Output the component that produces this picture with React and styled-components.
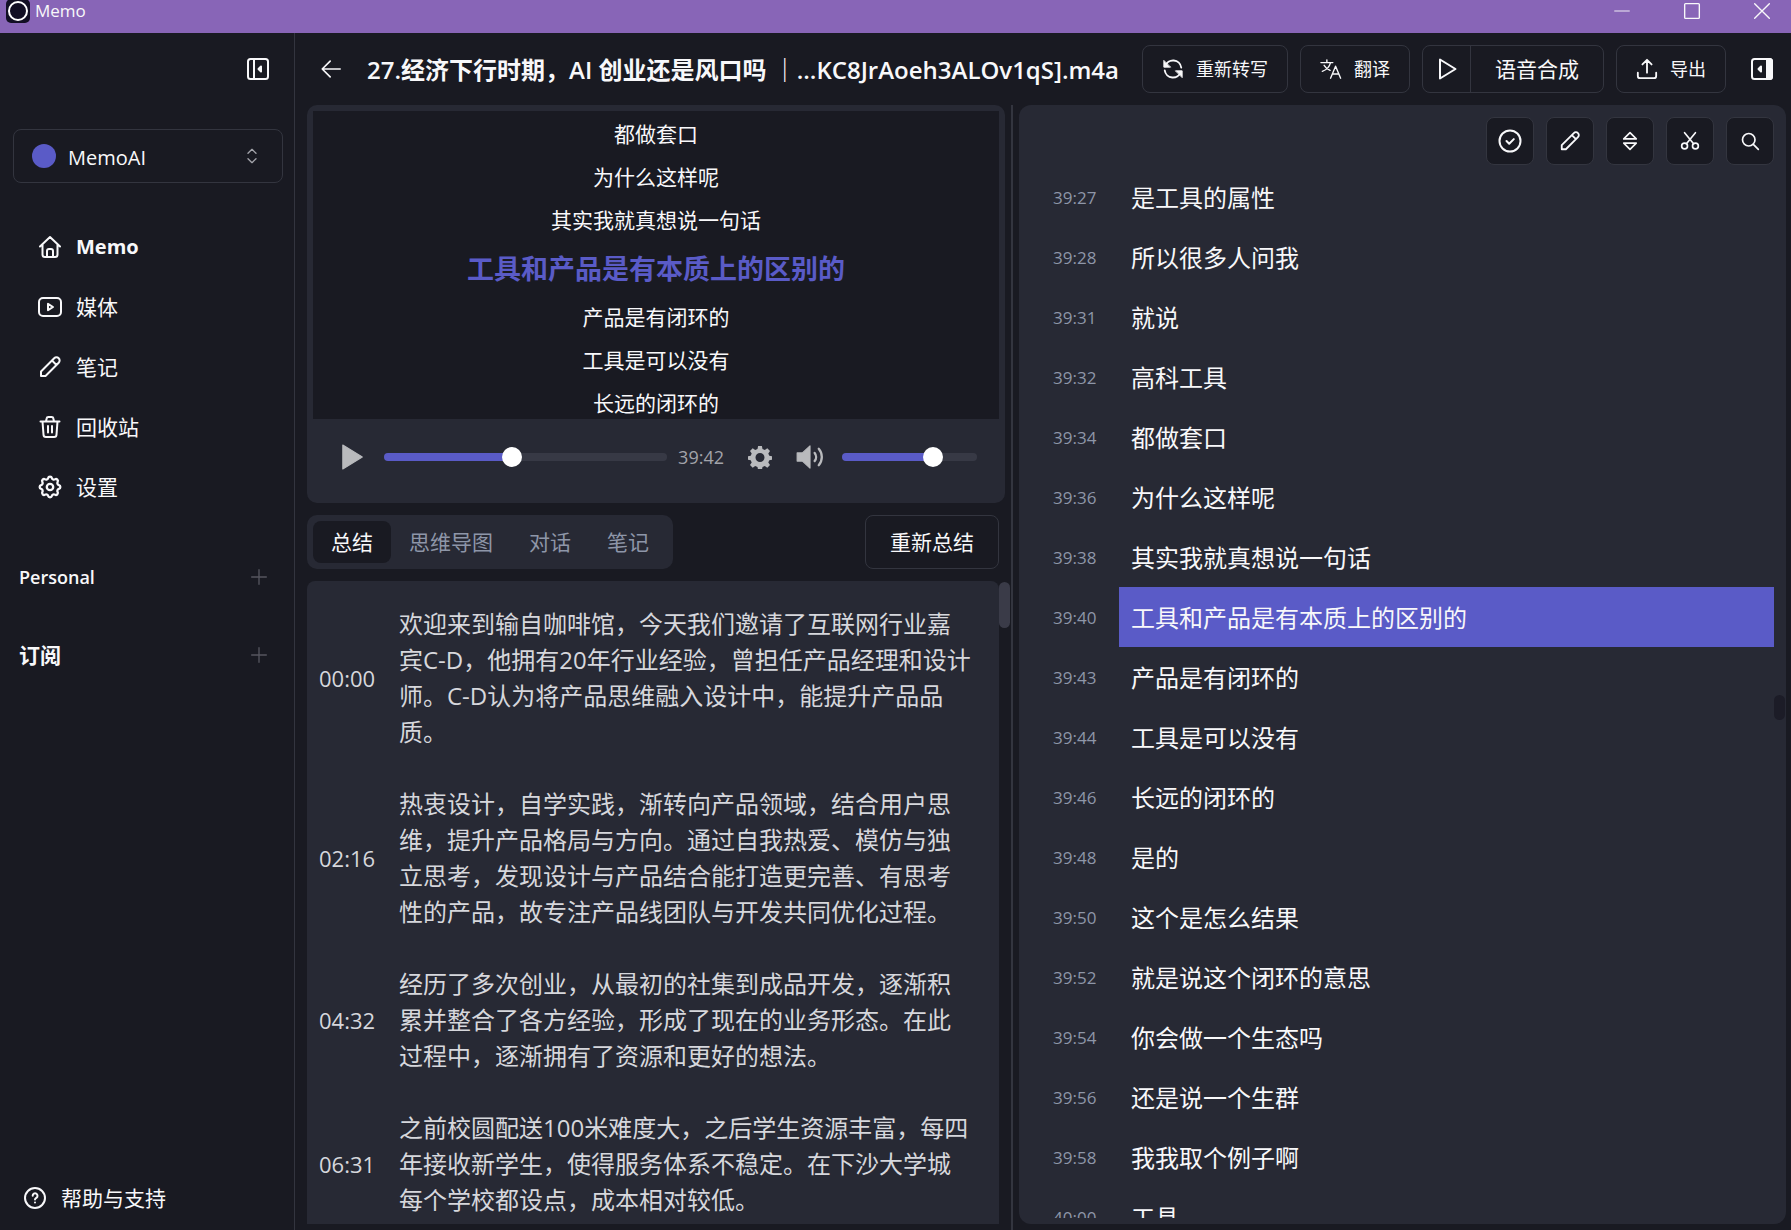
import React, { useState } from 'react';
import styled, { createGlobalStyle } from 'styled-components';

const colors = {
  bg: '#191a22',
  panel: '#272934',
  border: '#33353f',
  accent: '#5a5bc7',
  title: '#8865b7',
  text: '#f8f8fa',
  muted: '#8e96a8',
};

const GlobalStyle = createGlobalStyle`
  * {
    box-sizing: border-box;
  }

  body {
    margin: 0;
    background: ${colors.bg};
    color: ${colors.text};
    font-family: 'Open Sans', 'Noto Sans CJK SC', sans-serif;
    font-size: 21px;
    line-height: 32px;
  }

  ul,
  ol,
  p,
  h1,
  h2 {
    margin: 0;
    padding: 0;
    list-style: none;
  }

  a {
    color: inherit;
    text-decoration: none;
  }

  button,
  select {
    margin: 0;
    padding: 0;
    border: 0;
    background: none;
    color: inherit;
    font: inherit;
    cursor: pointer;
  }
`;

/* Icons */
const Svg = styled.svg`
  display: block;
  flex: none;
  width: ${(props) => props.$size}px;
  height: ${(props) => props.$size}px;
  fill: none;
  stroke: currentColor;
  stroke-width: ${(props) => props.$stroke || 2};
  stroke-linecap: round;
  stroke-linejoin: round;

  .solid {
    fill: currentColor;
  }
`;

const icons = {
  panelLeft: (
    <>
      <rect x="2" y="2" width="20" height="20" rx="2.5" />
      <path d="M8 2v20" />
      <path className="solid" d="M15 9.5L12.5 12l2.5 2.5z" />
    </>
  ),
  panelRight: (
    <>
      <rect x="2" y="2" width="20" height="20" rx="2.5" />
      <path className="solid" d="M17 2h2.5A2.5 2.5 0 0 1 22 4.500v15a2.500 2.500 0 0 1-2.500 2.500H17z" />
      <path className="solid" d="M11 9.500L8.500 12l2.500 2.500z" />
    </>
  ),
  arrowLeft: <path d="M23 12H1.500M11 2.500L1.500 12l9.500 9.500" />,
  updown: <path d="M6 8l6-6 6 6M6 16l6 6 6-6" />,
  home: (
    <path d="M2 11.500L12 2l10 9.500M4.500 9.500v10A2.500 2.500 0 0 0 7 22h10a2.500 2.500 0 0 0 2.500-2.500v-10M9 22v-6a2 2 0 0 1 2-2h2a2 2 0 0 1 2 2v6" />
  ),
  video: (
    <>
      <rect x="1" y="3" width="22" height="18" rx="4" />
      <path d="M10 8.800v6.400l5-3.200z" />
    </>
  ),
  pencil: (
    <path d="M3 21v-4.500L16.200 3.300a3.180 3.180 0 0 1 4.500 4.500L7.500 21zM14 5.500l4.500 4.500" />
  ),
  trash: (
    <path d="M2.500 6.500h19M8 6.500l.6-3A1.800 1.800 0 0 1 10.400 2h3.200a1.800 1.800 0 0 1 1.800 1.500l.6 3M4.500 6.500l1 13A2.500 2.500 0 0 0 8 22h8a2.500 2.500 0 0 0 2.500-2.500l1-13M10 11v6.500M14 11v6.500" />
  ),
  settings: (
    <g transform="translate(-1.800 -1.800) scale(1.150)">
      <path d="M10.325 4.317c.426-1.756 2.924-1.756 3.350 0a1.724 1.724 0 0 0 2.573 1.066c1.543-.94 3.310.826 2.370 2.370a1.724 1.724 0 0 0 1.065 2.572c1.756.426 1.756 2.924 0 3.350a1.724 1.724 0 0 0-1.066 2.573c.94 1.543-.826 3.310-2.370 2.370a1.724 1.724 0 0 0-2.572 1.065c-.426 1.756-2.924 1.756-3.350 0a1.724 1.724 0 0 0-2.573-1.066c-1.543.94-3.310-.826-2.370-2.370a1.724 1.724 0 0 0-1.065-2.572c-1.756-.426-1.756-2.924 0-3.350a1.724 1.724 0 0 0 1.066-2.573c-.94-1.543.826-3.310 2.370-2.370 1 .608 2.296.07 2.572-1.065z" />
      <circle cx="12" cy="12" r="2.800" />
    </g>
  ),
  plus: <path d="M12 1v22M1 12h22" />,
  help: (
    <>
      <circle cx="12" cy="12" r="10" />
      <path d="M9.700 9.800a2.400 2.400 0 1 1 3.700 2c-.9.600-1.400.9-1.400 1.700M12 16.500v.1" />
    </>
  ),
  refresh: (
    <>
      <path d="M3.500 9A9 9 0 0 1 21 10.500M20.500 15A9 9 0 0 1 3 13.500" />
      <path className="solid" strokeWidth="1" d="M2 3v7h7zM22 21v-7h-7z" />
    </>
  ),
  translate: (
    <path d="M1 5h13M7.500 2v3M11.500 5c-1 4-4.500 8-9 9.500M4.500 8c1.500 2.500 4 4.500 6.500 5.500M11.500 22L17 9l5.500 13M13.500 17.500h7" />
  ),
  play: <path d="M5 2.500v19L20.500 12z" />,
  upload: (
    <path d="M12 16V2.500M7 7l5-5 5 5M2 16v3.500A2.500 2.500 0 0 0 4.500 22h15a2.500 2.500 0 0 0 2.500-2.500V16" />
  ),
  check: (
    <>
      <circle cx="12" cy="12" r="10.500" />
      <path d="M8.500 12l2.700 2.700 4.600-4.600" />
    </>
  ),
  sort: <path d="M12 2l7.500 7.500h-15zM12 22l7.500-7.500h-15z" />,
  scissors: (
    <>
      <circle cx="5.500" cy="18" r="3.500" />
      <circle cx="18.500" cy="18" r="3.500" />
      <path d="M5.500 2l10.800 13.300M18.500 2L7.700 15.300" />
    </>
  ),
  search: (
    <>
      <circle cx="10.500" cy="10.500" r="7.500" />
      <path d="M16 16l6 6" />
    </>
  ),
  playSolid: <path className="solid" strokeWidth="1" d="M3.500 1v22L21.500 12z" />,
  gearSolid: (
    <path
      fill="currentColor"
      fillRule="evenodd"
      stroke="none"
      d="M10.100 1h3.800l.6 3 2.300 1 2.500-1.700 2.700 2.700-1.700 2.500 1 2.300 3 .6v3.200l-3 .6-1 2.300 1.700 2.500-2.700 2.700-2.500-1.700-2.300 1-.6 3h-3.800l-.6-3-2.300-1L4.700 22.700 2 20l1.700-2.500-1-2.300-3-.6v-3.200l3-.6 1-2.300L2 6l2.700-2.700L7.200 5l2.300-1zM12 8a4.500 4.500 0 1 0 0 9 4.500 4.500 0 0 0 0-9z"
    />
  ),
  volume: (
    <>
      <path className="solid" strokeWidth="1" d="M1 8.500h4.500L12 2.500v19l-6.500-6H1z" />
      <path d="M16 8.500c1.600 2 1.600 5 0 7M19.500 5c3.500 4 3.500 10 0 14" />
    </>
  ),
  minimize: <path d="M4 12h16" />,
  maximize: <rect x="4" y="4" width="16" height="16" rx="1" />,
  close: <path d="M4 4l16 16M20 4L4 20" />,
};

const Icon = ({ name, size = 24, stroke }) => (
  <Svg viewBox="0 0 24 24" $size={size} $stroke={stroke} aria-hidden="true">
    {icons[name]}
  </Svg>
);

/* Window */
const Window = styled.div`
  display: flex;
  flex-direction: column;
  height: 100vh;
  overflow: hidden;
`;

const TitleBar = styled.div`
  display: flex;
  align-items: center;
  flex: none;
  height: 33px;
  padding: 0 6px 12px;
  background: ${colors.title};
  font-size: 17px;
  line-height: 20px;
`;

const AppLogo = styled.span`
  display: flex;
  align-items: center;
  justify-content: center;
  width: 24px;
  height: 24px;
  margin-right: 5px;
  border-radius: 5px;
  background: #120f24;

  &::before {
    content: '';
    width: 16px;
    height: 16px;
    border: 2px solid #fff;
    border-radius: 50%;
  }
`;

const WindowButtons = styled.div`
  display: flex;
  gap: 24px;
  margin-left: auto;

  button {
    display: flex;
    justify-content: center;
    width: 46px;
  }
`;

const Body = styled.div`
  display: flex;
  flex: 1;
  min-height: 0;
`;

/* Sidebar */
const Sidebar = styled.aside`
  display: flex;
  flex-direction: column;
  flex: none;
  width: 295px;
  border-right: 1px solid ${colors.border};
`;

const SidebarTop = styled.div`
  display: flex;
  align-items: center;
  justify-content: flex-end;
  height: 72px;
  padding-right: 24px;
`;

const Workspace = styled.label`
  display: flex;
  align-items: center;
  height: 54px;
  margin: 24px 11px 0 13px;
  padding: 0 22px 0 18px;
  border: 1px solid ${colors.border};
  border-radius: 8px;

  select {
    flex: 1;
    min-width: 0;
    margin-left: 12px;
    padding-top: 3px;
    appearance: none;
    outline: none;
    font-size: 20px;
  }

  svg {
    color: #a3a4aa;
  }
`;

const Dot = styled.span`
  width: 24px;
  height: 24px;
  border-radius: 50%;
  background: ${colors.accent};
`;

const Nav = styled.nav`
  margin-top: 34px;
`;

const NavLink = styled.a`
  display: flex;
  align-items: center;
  gap: 14px;
  height: 60px;
  padding-left: 38px;
  font-weight: ${(props) => (props.$active ? 700 : 400)};
  font-size: ${(props) => (props.$active ? 20 : 21)}px;
`;

const Groups = styled.div`
  flex: 1;
  margin-top: 21px;
`;

const Group = styled.div`
  display: flex;
  align-items: center;
  justify-content: space-between;
  height: 78px;
  padding: 0 27px 0 19px;

  h2 {
    font-size: ${(props) => (props.$latin ? 18 : 21)}px;
    font-weight: ${(props) => (props.$latin ? 600 : 700)};
  }

  button {
    color: #55565f;
  }
`;

const HelpLink = styled.a`
  display: flex;
  align-items: center;
  gap: 14px;
  height: 44px;
  margin-bottom: 10px;
  padding-left: 23px;
`;

/* Main */
const Main = styled.main`
  display: flex;
  flex-direction: column;
  flex: 1;
  min-width: 0;
`;

const Header = styled.header`
  display: flex;
  align-items: center;
  flex: none;
  height: 72px;
  padding: 0 17px 0 26px;

  h1 {
    flex: 1;
    min-width: 0;
    margin: 0 18px 0 26px;
    padding-top: 2px;
    overflow: hidden;
    font-size: 24px;
    font-weight: 600;
    line-height: 36px;
    white-space: nowrap;
  }
`;

const Actions = styled.div`
  display: flex;
  gap: 12px;
  margin-right: 24px;
`;

const ActionButton = styled.button`
  display: flex;
  align-items: center;
  gap: 12px;
  height: 48px;
  padding: 0 19px;
  border: 1px solid ${colors.border};
  border-radius: 8px;
  font-size: 18px;
  white-space: nowrap;
`;

const SplitButton = styled.div`
  display: flex;
  height: 48px;
  border: 1px solid ${colors.border};
  border-radius: 8px;

  button {
    display: flex;
    align-items: center;
    justify-content: center;
    width: 47px;
    white-space: nowrap;
  }

  button + button {
    width: auto;
    padding: 0 24px;
    border-left: 1px solid ${colors.border};
  }
`;

const Columns = styled.div`
  display: flex;
  flex: 1;
  min-height: 0;
`;

/* Left column */
const LeftColumn = styled.section`
  display: flex;
  flex-direction: column;
  flex: 0 1 718px;
  min-width: 0;
  padding: 0 6px 0 12px;
  border-right: 2px solid ${colors.border};
`;

const Player = styled.div`
  flex: none;
  padding: 6px;
  border-radius: 10px;
  background: ${colors.panel};
`;

const Lyrics = styled.ol`
  height: 308px;
  padding-top: 2px;
  overflow: hidden;
  background: ${colors.bg};
  text-align: center;
`;

const LyricLine = styled.li`
  height: ${(props) => (props.$active ? 54 : 43)}px;
  color: ${(props) => (props.$active ? colors.accent : 'inherit')};
  font-size: ${(props) => (props.$active ? 27 : 21)}px;
  font-weight: ${(props) => (props.$active ? 700 : 400)};
  line-height: ${(props) => (props.$active ? 54 : 43)}px;
`;

const Controls = styled.div`
  display: flex;
  align-items: center;
  height: 78px;
  padding: 0 22px 2px 26px;
  color: #b9babd;
  font-size: 18px;

  button {
    margin-left: 24px;
  }

  button:first-child {
    margin: 0 19px 0 0;
  }

  time {
    margin-left: 11px;
    color: #a2a3aa;
  }
`;

const Range = styled.input.attrs((props) => ({
  type: 'range',
  style: { '--filled': `${props.value}%` },
}))`
  flex: ${(props) => (props.$fixed ? 'none' : 1)};
  width: ${(props) => (props.$fixed ? '135px' : 'auto')};
  min-width: 0;
  height: 8px;
  margin: 0 0 0 ${(props) => (props.$fixed ? 18 : 0)}px;
  appearance: none;
  border-radius: 4px;
  background: linear-gradient(
    to right,
    ${colors.accent} var(--filled),
    #373945 var(--filled)
  );

  &::-webkit-slider-thumb {
    appearance: none;
    width: 20px;
    height: 20px;
    border-radius: 50%;
    background: #fff;
  }
`;

const TabRow = styled.div`
  display: flex;
  flex: none;
  justify-content: space-between;
  margin: 12px 6px 12px 0;
`;

const Tabs = styled.div`
  display: flex;
  padding: 6px;
  border-radius: 10px;
  background: ${colors.panel};
`;

const Tab = styled.button`
  height: 42px;
  padding: 0 18px;
  border-radius: 8px;
  background: ${(props) => (props.$active ? colors.bg : 'none')};
  color: ${(props) => (props.$active ? colors.text : colors.muted)};
  white-space: nowrap;
`;

const OutlineButton = styled.button`
  height: 54px;
  padding: 0 24px;
  border: 1px solid ${colors.border};
  border-radius: 8px;
  white-space: nowrap;
`;

const SummaryWrap = styled.div`
  position: relative;
  flex: 1;
  min-height: 0;
  margin-bottom: 6px;
  padding-right: 6px;
`;

const Summary = styled.ol`
  height: 100%;
  padding: 7px 25px 0 12px;
  overflow: hidden;
  border-radius: 8px 8px 0 0;
  background: ${colors.panel};
  color: #d6d7dc;

  li {
    display: flex;
    align-items: center;
    padding: 18px 0;
  }

  time {
    flex: none;
    width: 80px;
    font-size: 22px;
  }

  p {
    flex: 1;
    font-size: 24px;
    line-height: 36px;
  }
`;

/* Scroll thumb over the panel edge */
const Thumb = styled.span`
  position: absolute;
  top: ${(props) => props.$top}px;
  right: ${(props) => props.$right}px;
  width: 11px;
  height: ${(props) => props.$height}px;
  border-radius: 6px;
  background: ${(props) => props.$color};
`;

/* Right column */
const Transcript = styled.section`
  position: relative;
  display: flex;
  flex-direction: column;
  flex: 1;
  min-width: 0;
  margin: 0 5px 6px 6px;
  padding-bottom: 6px;
  border-radius: 12px;
  background: ${colors.panel};
`;

const Toolbar = styled.div`
  display: flex;
  flex: none;
  justify-content: flex-end;
  gap: 12px;
  padding: 12px 12px 2px;

  button {
    display: flex;
    align-items: center;
    justify-content: center;
    width: 48px;
    height: 48px;
    border: 1px solid ${colors.border};
    border-radius: 8px;
    background: ${colors.bg};
  }
`;

const Lines = styled.ol`
  flex: 1;
  min-height: 0;
  padding-right: 12px;
  overflow: hidden;
`;

const Line = styled.li`
  display: flex;
  height: 60px;
  line-height: 62px;

  time {
    flex: none;
    width: 100px;
    padding-left: 34px;
    color: ${colors.muted};
    font-size: 17px;
  }

  p {
    flex: 1;
    padding-left: 12px;
    background: ${(props) => (props.$active ? colors.accent : 'none')};
    font-size: 24px;
  }
`;

const navItems = [
  { icon: 'home', label: 'Memo', active: true },
  { icon: 'video', label: '媒体' },
  { icon: 'pencil', label: '笔记' },
  { icon: 'trash', label: '回收站' },
  { icon: 'settings', label: '设置' },
];

const tabs = ['总结', '思维导图', '对话', '笔记'];

const tools = [
  { icon: 'check', label: '完成', size: 24 },
  { icon: 'pencil', label: '编辑', size: 22 },
  { icon: 'sort', label: '展开', size: 20 },
  { icon: 'scissors', label: '剪辑', size: 20 },
  { icon: 'search', label: '搜索', size: 20 },
];

const summary = [
  [
    '00:00',
    '欢迎来到输自咖啡馆，今天我们邀请了互联网行业嘉宾C-D，他拥有20年行业经验，曾担任产品经理和设计师。C-D认为将产品思维融入设计中，能提升产品品质。',
  ],
  [
    '02:16',
    '热衷设计，自学实践，渐转向产品领域，结合用户思维，提升产品格局与方向。通过自我热爱、模仿与独立思考，发现设计与产品结合能打造更完善、有思考性的产品，故专注产品线团队与开发共同优化过程。',
  ],
  [
    '04:32',
    '经历了多次创业，从最初的社集到成品开发，逐渐积累并整合了各方经验，形成了现在的业务形态。在此过程中，逐渐拥有了资源和更好的想法。',
  ],
  [
    '06:31',
    '之前校圆配送100米难度大，之后学生资源丰富，每四年接收新学生，使得服务体系不稳定。在下沙大学城每个学校都设点，成本相对较低。',
  ],
];

const lines = [
  ['39:27', '是工具的属性'],
  ['39:28', '所以很多人问我'],
  ['39:31', '就说'],
  ['39:32', '高科工具'],
  ['39:34', '都做套口'],
  ['39:36', '为什么这样呢'],
  ['39:38', '其实我就真想说一句话'],
  ['39:40', '工具和产品是有本质上的区别的'],
  ['39:43', '产品是有闭环的'],
  ['39:44', '工具是可以没有'],
  ['39:46', '长远的闭环的'],
  ['39:48', '是的'],
  ['39:50', '这个是怎么结果'],
  ['39:52', '就是说这个闭环的意思'],
  ['39:54', '你会做一个生态吗'],
  ['39:56', '还是说一个生群'],
  ['39:58', '我我取个例子啊'],
  ['40:00', '工具'],
];

const current = 7;

const App = () => {
  const [tab, setTab] = useState(0);
  const [progress, setProgress] = useState(45);
  const [volume, setVolume] = useState(70);

  return (
    <Window>
      <GlobalStyle />

      {/* Title bar */}
      <TitleBar>
        <AppLogo />
        Memo
        <WindowButtons>
          <button aria-label="最小化">
            <Icon name="minimize" size={22} stroke={1} />
          </button>
          <button aria-label="最大化">
            <Icon name="maximize" size={22} stroke={1.5} />
          </button>
          <button aria-label="关闭">
            <Icon name="close" size={22} stroke={1.5} />
          </button>
        </WindowButtons>
      </TitleBar>

      <Body>
        {/* Sidebar */}
        <Sidebar>
          <SidebarTop>
            <button aria-label="收起侧栏">
              <Icon name="panelLeft" />
            </button>
          </SidebarTop>

          <Workspace>
            <Dot />
            <select aria-label="工作区">
              <option>MemoAI</option>
            </select>
            <Icon name="updown" size={16} />
          </Workspace>

          <Nav>
            {navItems.map((v) => (
              <NavLink href="#" key={v.icon} $active={v.active}>
                <Icon name={v.icon} />
                {v.label}
              </NavLink>
            ))}
          </Nav>

          <Groups>
            <Group $latin>
              <h2>Personal</h2>
              <button aria-label="添加">
                <Icon name="plus" size={16} />
              </button>
            </Group>
            <Group>
              <h2>订阅</h2>
              <button aria-label="添加">
                <Icon name="plus" size={16} />
              </button>
            </Group>
          </Groups>

          <HelpLink href="#">
            <Icon name="help" />
            帮助与支持
          </HelpLink>
        </Sidebar>

        <Main>
          {/* Header */}
          <Header>
            <button aria-label="返回">
              <Icon name="arrowLeft" size={20} />
            </button>
            <h1>27.经济下行时期，AI 创业还是风口吗 ｜...KC8JrAoeh3ALOv1qS].m4a</h1>
            <Actions>
              <ActionButton>
                <Icon name="refresh" size={22} />
                重新转写
              </ActionButton>
              <ActionButton>
                <Icon name="translate" size={22} stroke={1.5} />
                翻译
              </ActionButton>
              <SplitButton>
                <button aria-label="播放">
                  <Icon name="play" />
                </button>
                <button>语音合成</button>
              </SplitButton>
              <ActionButton>
                <Icon name="upload" size={22} />
                导出
              </ActionButton>
            </Actions>
            <button aria-label="收起字幕">
              <Icon name="panelRight" />
            </button>
          </Header>

          <Columns>
            <LeftColumn>
              {/* Player */}
              <Player>
                <Lyrics>
                  {lines.slice(current - 3, current + 4).map(([time, text]) => (
                    <LyricLine key={time} $active={time === lines[current][0]}>
                      {text}
                    </LyricLine>
                  ))}
                </Lyrics>
                <Controls>
                  <button aria-label="播放">
                    <Icon name="playSolid" size={26} />
                  </button>
                  <Range
                    aria-label="进度"
                    value={progress}
                    onChange={(e) => setProgress(e.target.value)}
                  />
                  <time>39:42</time>
                  <button aria-label="播放设置">
                    <Icon name="gearSolid" />
                  </button>
                  <button aria-label="静音">
                    <Icon name="volume" size={28} />
                  </button>
                  <Range
                    $fixed
                    aria-label="音量"
                    value={volume}
                    onChange={(e) => setVolume(e.target.value)}
                  />
                </Controls>
              </Player>

              {/* Tabs */}
              <TabRow>
                <Tabs role="tablist">
                  {tabs.map((v, i) => (
                    <Tab
                      key={v}
                      role="tab"
                      aria-selected={tab === i}
                      $active={tab === i}
                      onClick={() => setTab(i)}
                    >
                      {v}
                    </Tab>
                  ))}
                </Tabs>
                <OutlineButton>重新总结</OutlineButton>
              </TabRow>

              {/* Summary */}
              <SummaryWrap>
                <Summary>
                  {summary.map(([time, text]) => (
                    <li key={time}>
                      <time>{time}</time>
                      <p>{text}</p>
                    </li>
                  ))}
                </Summary>
                <Thumb $top={1} $right={-5} $height={46} $color="#3a3b48" />
              </SummaryWrap>
            </LeftColumn>

            {/* Transcript */}
            <Transcript>
              <Toolbar>
                {tools.map((v) => (
                  <button key={v.icon} aria-label={v.label}>
                    <Icon name={v.icon} size={v.size} />
                  </button>
                ))}
              </Toolbar>
              <Lines>
                {lines.map(([time, text], i) => (
                  <Line key={time} $active={i === current}>
                    <time>{time}</time>
                    <p>{text}</p>
                  </Line>
                ))}
              </Lines>
              <Thumb $top={590} $right={1} $height={25} $color="#1c1c27" />
            </Transcript>
          </Columns>
        </Main>
      </Body>
    </Window>
  );
};

export default App;
